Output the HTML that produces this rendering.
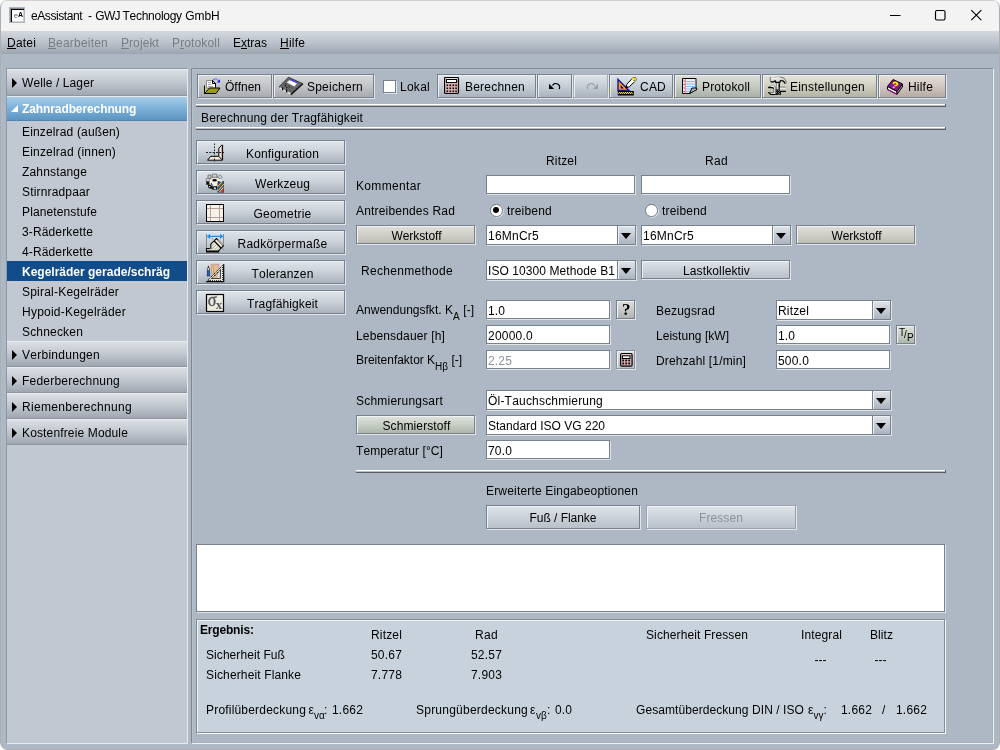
<!DOCTYPE html>
<html><head><meta charset="utf-8"><title>eAssistant - GWJ Technology GmbH</title>
<style>
*{box-sizing:border-box;margin:0;padding:0}
html,body{width:1000px;height:750px;overflow:hidden;background:#fff}
body{font-kerning:none;font-family:"Liberation Sans",sans-serif;font-size:12px;color:#000;letter-spacing:0.12px;position:relative}
.abs,.abs>*{position:absolute}
#win{position:absolute;left:0;top:0;width:1000px;height:750px;background:#aeb8c4;border-radius:8px;overflow:hidden;border:1px solid #acaeb1;border-top:0;will-change:transform}
#title{position:absolute;left:0;top:0;width:1000px;height:31px;background:#f3f3f3;box-shadow:inset 0 1px 0 #cfcfcf}
#title .t{position:absolute;left:30px;top:9px;font-size:12px;letter-spacing:-0.17px;line-height:14px}
#menu{position:absolute;left:0;top:31px;width:1000px;height:23px;background:linear-gradient(#d4d8de,#bcc3cc 50%,#9ca5b0)}
#menu span{position:absolute;top:5px;font-size:12px;line-height:14px}
#menu span.d{color:#787d84}
#menu u{text-decoration:underline}
.lbl{position:absolute;white-space:nowrap;line-height:14px;height:14px}
.btn{position:absolute;border:1px solid #8d949d;background:linear-gradient(#dfe3e8,#c3c9d1);box-shadow:inset 1px 1px 0 #f4f6f8;text-align:center;white-space:nowrap}
.inp{position:absolute;background:#fff;border:1px solid #78808b;box-shadow:1px 1px 0 #dfe4e9;white-space:nowrap;overflow:hidden}
.inp span{position:absolute;left:1px;top:3px;line-height:14px}

#side{position:absolute;left:5px;top:68px;width:182px;height:676px;background:#c2c8d1;border:1px solid #8f99a5;border-right-color:#e6eaee;border-bottom-color:#e6eaee}
.sh{position:absolute;left:0;width:180px;height:26px;box-shadow:inset 0 1px 0 #e8ebef;background:linear-gradient(#dde1e6 0%,#c2c8d0 50%,#a0a7b1 100%);border-bottom:1px solid #8f96a0}
.sh span{position:absolute;left:15px;top:7px;line-height:14px;white-space:nowrap}
.sh i{position:absolute;left:5px;top:9px;width:0;height:0;border-left:5.500px solid #000;border-top:5px solid transparent;border-bottom:5px solid transparent}
.sh.open{background:linear-gradient(#a8d0ea 0%,#7eb2d9 50%,#5c95c3 100%);border-bottom:1px solid #4f86b4;color:#fff;font-weight:bold;letter-spacing:-0.1px}
.sh.open span{top:6px}
.sh.open i{left:4px;top:9px;border:0;border-left:7px solid transparent;border-bottom:7px solid #fff}
.si{position:absolute;left:0;width:180px;height:20px}
.si span{position:absolute;left:15px;top:4px;line-height:14px;white-space:nowrap}
.si.sel{background:#114c8b;color:#fff;font-weight:bold;letter-spacing:0}

#main{position:absolute;left:190px;top:68px;width:802px;height:675px;border:1px solid #7f8791;border-right-color:#a6afba;border-bottom-color:#a6afba;box-shadow:inset 1px 1px 0 #b7c0cb,1px 1px 0 #eef1f4}
.tb{position:absolute;top:74px;height:24px;border:1px solid #78808b;background:linear-gradient(#d9dbde 0%,#c6c9cc 50%,#abafb3 100%);box-shadow:1px 1px 0 #e2e6eb,inset 1px 1px 0 #eceef0;white-space:nowrap}
.tb span{position:absolute;top:5px;line-height:14px}
.tb svg{position:absolute}
.sep{position:absolute;height:3px;background:linear-gradient(#fff 0,#fff 1px,#b9bcc0 1px,#b9bcc0 2px,#585c62 2px,#585c62 3px);border-right:1px solid #585c62}
.nb{position:absolute;left:195px;width:149px;height:24px;border:1px solid #78808b;background:linear-gradient(#dfe4ea 0%,#cdd3db 45%,#a9b1bc 100%);box-shadow:1px 1px 0 #e2e6eb,inset 1px 1px 0 #eef1f4;white-space:nowrap}
.nb span{position:absolute;left:24px;right:0;top:6px;line-height:14px;text-align:center}
.nb svg{position:absolute}
.bt{position:absolute;height:19px;border:1px solid #78808b;background:linear-gradient(#dfe3e9 0%,#ccd2da 50%,#b9c0ca 100%);box-shadow:1px 1px 0 #e2e6eb,inset 1px 1px 0 #f0f2f5;text-align:center;line-height:14px;padding:3px 0 0 2px;white-space:nowrap}
.bt.w{background:linear-gradient(#e0dfd9 0%,#d0cfc8 50%,#bfbeb6 100%)}
.bt.dis{color:#8a929c}
.cb{position:absolute;height:20px;background:#fff;border:1px solid #78808b;box-shadow:1px 1px 0 #dfe4e9}
.cb span{position:absolute;left:1px;top:3px;line-height:14px;white-space:nowrap}
.cb b{position:absolute;right:0;top:0;bottom:0;width:18px;border-left:1px solid #78808b;background:linear-gradient(#dfe4ea,#c6cdd6 50%,#aab3bf);box-shadow:inset 1px 1px 0 #eef1f4}
.cb b:after{content:"";position:absolute;left:3px;top:7px;border-left:5px solid transparent;border-right:5px solid transparent;border-top:6px solid #000}
.rd{position:absolute;width:12.500px;height:12.500px;border-radius:50%;background:#fff;border:1px solid #6d7580;box-shadow:0.700px 0.700px 0 #e6eaee}
.rd.on:after{content:"";position:absolute;left:2.100px;top:2.100px;width:6.300px;height:6.300px;border-radius:50%;background:#000}

#res{position:absolute;left:195px;top:619px;width:749px;height:114px;background:#c8d2dd;border:1px solid #858d97;box-shadow:inset 1px 1px 0 #eef1f4,1px 1px 0 #f4f6f8}
sub{font-size:10px;vertical-align:baseline;position:relative;top:6px;line-height:0}

.tb{background:linear-gradient(#dde3ea 0%,#c9d0d9 45%,#aab3be 100%)}
.tb.g{background:linear-gradient(#d6d8da 0%,#c2c4c7 50%,#a8abaf 100%)}
.tb.gr{background:linear-gradient(#dcdfd9 0%,#c6cbc4 50%,#a9b0a8 100%)}
.tb.be{background:linear-gradient(#e4e4d9 0%,#d0d0c2 50%,#b3b3a3 100%)}
.tb.pk{background:linear-gradient(#e6dfda 0%,#d2c8c2 50%,#b6aaa3 100%)}
.tb.dis{border-color:#a3abb5}
.bt.n{background:linear-gradient(#dedede 0%,#cbcbcb 50%,#b2b2b2 100%)}
.bt.gn{background:linear-gradient(#dfe4dc 0%,#c8cfc5 50%,#adb6aa 100%)}
</style></head><body>
<div id="win">
<div id="title"><div style="position:absolute;left:8px;top:7px;width:16px;height:16px;border:1px solid #a9b7c6;background:#fff;box-shadow:inset 1px 1px 0 #8a8a8a,inset 2px 2px 0 #000,inset -1px -1px 0 #d0d0d0;font-size:7px;font-weight:bold;letter-spacing:0;line-height:8px"><span style="position:absolute;left:4px;top:4px;color:#555;font-weight:normal">e</span><span style="position:absolute;left:8px;top:3px">A</span></div>
<svg style="position:absolute;left:884px;top:5px" width="110" height="22" viewBox="885 5 110 22" fill="none" stroke="#000" stroke-width="1.150"><path d="M890 15.5h10.5"></path><rect x="935.5" y="10.5" width="9.5" height="9.5" rx="1.5"></rect><path d="M971.3 10.2l10 10M981.3 10.2l-10 10"></path></svg>
<span class="t" style="left:30px;letter-spacing:-0.42px">eAssistant</span><span class="t" style="left:87px;letter-spacing:0">-</span><span class="t" style="left:94.3px;letter-spacing:-0.75px">GWJ</span><span class="t" style="left:121.5px;letter-spacing:-0.27px">Technology</span><span class="t" style="left:184.3px;letter-spacing:-0.1px">GmbH</span></div>
<div id="menu"><span style="left: 6px; letter-spacing: 0.163px;"><u style="letter-spacing: 0.334px;">D</u>atei</span><span class="d" style="left: 47px; letter-spacing: 0.218px;"><u style="letter-spacing: -0.004px;">B</u>earbeiten</span><span class="d" style="left: 120px; letter-spacing: 0.109px;"><u style="letter-spacing: -0.004px;">P</u>rojekt</span><span class="d" style="left: 171px; letter-spacing: 0.164px;">P<u style="letter-spacing: 0.004px;">r</u>otokoll</span><span style="left: 232px; letter-spacing: -0.002px;">E<u style="letter-spacing: 0px;">x</u>tras</span><span style="left: 279px; letter-spacing: 0.165px;"><u style="letter-spacing: 0.334px;">H</u>ilfe</span></div>
<div id="side">
<div class="sh" style="top:0;height:27px"><i style="top:9px"></i><span style="top: 7px; letter-spacing: 0.1px;">Welle / Lager</span></div>
<div class="sh open" style="top:27px;height:25px"><i></i><span>Zahnradberechnung</span></div>
<div class="si" style="top:52px"><span style="letter-spacing: 0.154px;">Einzelrad (außen)</span></div>
<div class="si" style="top:72px"><span style="letter-spacing: 0.193px;">Einzelrad (innen)</span></div>
<div class="si" style="top:92px"><span style="letter-spacing: 0.162px;">Zahnstange</span></div>
<div class="si" style="top:112px"><span style="letter-spacing: 0.164px;">Stirnradpaar</span></div>
<div class="si" style="top:132px"><span style="letter-spacing: 0.124px;">Planetenstufe</span></div>
<div class="si" style="top:152px"><span style="letter-spacing: 0.136px;">3-Räderkette</span></div>
<div class="si" style="top:172px"><span style="letter-spacing: 0.136px;">4-Räderkette</span></div>
<div class="si sel" style="top:192px"><span>Kegelräder gerade/schräg</span></div>
<div class="si" style="top:212px"><span style="letter-spacing: 0.213px;">Spiral-Kegelräder</span></div>
<div class="si" style="top:232px"><span style="letter-spacing: 0.232px;">Hypoid-Kegelräder</span></div>
<div class="si" style="top:252px"><span style="letter-spacing: 0.181px;">Schnecken</span></div>
<div class="sh" style="top:272px"><i></i><span style="letter-spacing: 0.272px;">Verbindungen</span></div>
<div class="sh" style="top:298px"><i></i><span style="letter-spacing: 0.218px;">Federberechnung</span></div>
<div class="sh" style="top:324px"><i></i><span style="letter-spacing: 0.329px;">Riemenberechnung</span></div>
<div class="sh" style="top:350px"><i></i><span style="letter-spacing: 0.145px;">Kostenfreie Module</span></div>
</div>
<div id="main"></div>
<div class="tb g" style="left:196px;width:75px"><svg style="left:6px;top:3px" width="17" height="17" viewBox="0 0 17 17"><path d="M2.5 2.5h6l3 3v4.5h-9z" fill="#fff" stroke="#888" stroke-width="1"></path><path d="M8.5 2.5v3h3z" fill="#fff" stroke="#000" stroke-width="1"></path><path d="M8.5 2.5l3 3v4" fill="none" stroke="#000" stroke-width="1"></path><path d="M4 4.5h3M4 6.5h3.5M4 8.500h5" stroke="#aaa" stroke-width="1"></path><path d="M0.5 7.500v8" stroke="#000" stroke-width="1"></path><path d="M1 7.500h1.200v6.500l-1.200 1.500z" fill="#d6d64a"></path><path d="M0.500 15.500l5-5.500h10.500l-4 5.500z" fill="#9c9c18" stroke="#000" stroke-width="1" stroke-linejoin="round"></path><path d="M9.300 1.800q2.500-2.200 5 0.800" fill="none" stroke="#2a2aff" stroke-width="1" stroke-dasharray="1.500 0.700"></path><path d="M16 1.300v3.200h-3.200z" fill="#1a1aff"></path></svg><span style="left: 27px; letter-spacing: -0.004px;">Öffnen</span></div>
<div class="tb g" style="left:272px;width:101px"><svg style="left:4px;top:0px" width="27" height="22" viewBox="0 0 27 22"><path d="M10.400 2.200l14 6.300-11.600 10.600-11.700-7.300z" fill="#666" stroke="#2a2a2a" stroke-width="0.800"></path><path d="M13 19.700l11.600-10.700v-0.600" fill="none" stroke="#111" stroke-width="1.300"></path><path d="M11.700 5.100l7.300 3.200-2.500 3.200-7.700-3.900z" fill="#fff"></path><path d="M12 3.800l7.400 3.200-0.400 1.300-7.300-3.200z" fill="#3c3cff"></path><path d="M1.900 12.100l10.700 5.900-0.200 1.500-10.600-6.100z" fill="#f4f4f4"></path><path d="M4.300 12.500l0.600 2.800M8.300 14.500l0.600 3" stroke="#111" stroke-width="1.400"></path><path d="M6.500 10.200l1.500 0.800M8 12l1.500 0.800M10.500 11.500l1.500 0.800M7 8.500l1.300 0.700" stroke="#1a1a1a" stroke-width="1"></path><path d="M17 12.500l4-4" stroke="#777" stroke-width="1"></path></svg><span style="left: 33px; letter-spacing: 0.218px;">Speichern</span></div>
<div class="inp" style="left:382px;top:80px;width:13px;height:13px"></div>
<div class="lbl" style="left: 399px; top: 80px; letter-spacing: 0.263px;">Lokal</div>
<div class="tb" style="left:436px;width:99px"><svg style="left:6px;top:2px" width="16" height="18" viewBox="0 0 16 18"><rect x="0.500" y="0.500" width="14" height="16" rx="1.300" fill="#dcb0b4" stroke="#000" stroke-width="1.200"></rect><path d="M1.500 1.500h12" stroke="#f0d4d6" stroke-width="1"></path><rect x="2.500" y="2.500" width="10" height="3" fill="#fff" stroke="#000" stroke-width="1"></rect><g fill="#000"><rect x="2.500" y="7.500" width="1.600" height="1.600"></rect><rect x="5.500" y="7.500" width="1.600" height="1.600"></rect><rect x="8.500" y="7.500" width="1.600" height="1.600"></rect><rect x="11.300" y="7.500" width="1.600" height="1.600"></rect><rect x="2.500" y="10.500" width="1.600" height="1.600"></rect><rect x="5.500" y="10.500" width="1.600" height="1.600"></rect><rect x="8.500" y="10.500" width="1.600" height="1.600"></rect><rect x="11.300" y="10.500" width="1.600" height="1.600"></rect><rect x="2.500" y="13.500" width="1.600" height="1.600"></rect><rect x="5.500" y="13.500" width="1.600" height="1.600"></rect><rect x="8.500" y="13.500" width="1.600" height="1.600"></rect><rect x="11.300" y="13.500" width="1.600" height="1.600"></rect></g></svg><span style="left: 27px; letter-spacing: 0.217px;">Berechnen</span></div>
<div class="tb" style="left:536px;width:35px"><svg style="left:10px;top:6px" width="14" height="12" viewBox="0 0 14 12"><path d="M1 2.800v5.200h5.200z" fill="#000"></path><path d="M4.500 4.500a3.600 3.600 0 1 1 6.700 3.600" fill="none" stroke="#000" stroke-width="1.200"></path></svg></div>
<div class="tb dis" style="left:572px;width:35px"><svg style="left:11px;top:6px" width="14" height="12" viewBox="0 0 14 12"><path d="M13 2.800v5.200h-5.200z" fill="#9a9da1"></path><path d="M9.500 4.500a3.600 3.600 0 1 0-6.700 3.600" fill="none" stroke="#9a9da1" stroke-width="1.200"></path></svg></div>
<div class="tb" style="left:608px;width:64px"><svg style="left:7px;top:1px" width="20" height="20" viewBox="0 0 20 20"><path d="M1 3.500v11h11z" fill="#ff9a1a" stroke="#15158c" stroke-width="1.400" stroke-linejoin="miter"></path><path d="M3.600 9v3.400h3.400z" fill="#15158c"></path><rect x="0.800" y="15" width="16" height="4.500" fill="#000"></rect><path d="M1.500 17.800l1-1.600 1 1.600 1-1.600 1 1.600 1-1.600 1 1.600 1-1.600 1 1.600 1-1.600 1 1.600 1-1.600 1 1.600 1-1.600 1 1.600" fill="none" stroke="#ffff3a" stroke-width="1"></path><path d="M8.500 12l1.300-3.700 6.400-6.800 2.500 0.300 0.300 2.500-6.700 6.500z" fill="#fff" stroke="#000" stroke-width="1"></path><path d="M14.500 3.200l1.700-1.700 2.500 0.300 0.300 2.500-1.800 1.700z" fill="#ffee30"></path><path d="M16.700 4.700l0.800-0.800" stroke="#2030c0" stroke-width="1.200"></path><path d="M8.500 12l0.900-2.500 1.700 1.700z" fill="#000"></path></svg><span style="left: 30px; letter-spacing: 0.221px;">CAD</span></div>
<div class="tb gr" style="left:673px;width:87px"><svg style="left:7px;top:3px" width="16" height="17" viewBox="0 0 16 17"><path d="M0.500 0.500h13.500v9.500l-6 5.500h-7.500z" fill="#ececf2" stroke="#000" stroke-width="1"></path><path d="M4 3.500h9.500M4 6h9.500M4 8.500h9.500M4 11h7M4 13.500h4" stroke="#7cc0ff" stroke-width="1"></path><path d="M3.300 1v14.500" stroke="#ff7070" stroke-width="1"></path><path d="M1.600 3h1M1.600 6.500h1M1.600 10h1M1.600 13.500h1" stroke="#333" stroke-width="1"></path><path d="M7.500 15.500l2.500-5.500h4.500l0.500 1.500z" fill="#b8b8b8" stroke="#000" stroke-width="1" stroke-linejoin="round"></path></svg><span style="left: 27px; letter-spacing: 0.146px;">Protokoll</span></div>
<div class="tb be" style="left:761px;width:115px"><svg style="left:5px;top:1px" width="20" height="20" viewBox="0 0 20 20"><path d="M2.200 1.500h2.500l1.500 0.500 3-0.800h4.500l2.500 1.200 1.800 2.500v2.500l-1.200-0.300-0.800-2-1.800-0.700h-1.800l-0.400 1.600h-4l-0.500-1.400-2 0.800-2.300 0.400-0.800-1z" fill="#dcdcdc" stroke="#000" stroke-width="0.500"></path><path d="M2.500 5.700l2.300 0.400 2.500-1 0.500 1.500h4l0.500-1.800h2l1.500 0.700 1 2.100" fill="none" stroke="#000" stroke-width="1.100"></path><path d="M2.800 1.900h2.300l1.200 0.500 2.800-0.700h3" fill="none" stroke="#fff" stroke-width="1.100"></path><rect x="8.700" y="7.300" width="3.200" height="6" fill="#fff"></rect><path d="M11.200 7.300v6" stroke="#000" stroke-width="1.500"></path><path d="M8.700 7.300v6" stroke="#555" stroke-width="0.700"></path><rect x="7.800" y="13.400" width="5.100" height="5.400" fill="#000"></rect><path d="M8.500 14.500l3.500 3.500M10.300 14l2.300 2.300M8.300 16.300l2.300 2.300" stroke="#fff" stroke-width="0.800" stroke-dasharray="1 1"></path><path d="M0.300 11.200l2.200-1h4.200l1 1.500v5.500l-1.500 1.400h-3.300l-2.500-2 4.700 0.200 0.700-1.200v-2.600l-0.700-1.300z" fill="#e6e6e6" stroke="#000" stroke-width="0.500"></path><path d="M0.300 11.600h4.500l0.800 1.200" fill="none" stroke="#000" stroke-width="1.100"></path><path d="M0.300 16.300l2.500 2.200h4.800" fill="none" stroke="#000" stroke-width="1.100"></path><path d="M3 10.500h3.200" stroke="#fff" stroke-width="0.900"></path><rect x="11.900" y="11.300" width="6" height="4" fill="#c4c4c4"></rect><path d="M11.900 12.200h6" stroke="#f4f4f4" stroke-width="1.200"></path><path d="M11.900 11.100h6" stroke="#555" stroke-width="0.600"></path><path d="M11.900 15.300h6" stroke="#000" stroke-width="1.200"></path></svg><span style="left: 27px; letter-spacing: 0.227px;">Einstellungen</span></div>
<div class="tb pk" style="left:877px;width:68px"><svg style="left:7px;top:3px" width="18" height="18" viewBox="0 0 18 18"><path d="M1.500 8.500l5.500-7 9.500 4.500-5.500 7.500z" fill="#8c148c" stroke="#000" stroke-width="1" stroke-linejoin="round"></path><path d="M1.500 8.500v3l9.500 4.800v-2.800z" fill="#f4f4f4" stroke="#000" stroke-width="1" stroke-linejoin="round"></path><path d="M11 13.500l5.500-7.500v2.800l-5.500 7.500z" fill="#a0a0a0" stroke="#000" stroke-width="1" stroke-linejoin="round"></path><path d="M1.500 11.500l9.500 4.800" stroke="#8c148c" stroke-width="1.300"></path><path d="M7 5.800q1.500-2.200 3.800-1 1.500 1.200-0.500 2.400l-1.700 0.500" fill="none" stroke="#ffee00" stroke-width="1.700"></path><rect x="6.800" y="8.600" width="1.800" height="1.600" fill="#ffee00"></rect></svg><span style="left: 29px; letter-spacing: 0.199px;">Hilfe</span></div>
<div class="sep" style="left:195px;top:104px;width:750px"></div>
<div class="lbl" style="left: 200px; top: 111px; letter-spacing: 0.139px;">Berechnung der Tragfähigkeit</div>
<div class="sep" style="left:195px;top:127px;width:750px"></div>
<div class="nb" style="top:140px"><svg style="left:3px;top:-1px" width="32" height="24" viewBox="0 0 32 24"><path d="M7.600 20.200l3-3.900h8.200v-8l3-3.200h0.800v15.100z" fill="#f0ecd8" stroke="#000" stroke-width="1" stroke-linejoin="miter"></path><path d="M8.500 19.600l12.500 0 1-1v-12.500l-1 1.200v10.800l-1.200 1z" fill="#d8a0a8"></path><path d="M18.800 16.300l3 3.400" stroke="#000" stroke-width="1"></path><path d="M14.500 3.500v18.500" stroke="#222" stroke-width="1" stroke-dasharray="1.600 1.400"></path><path d="M6 12.500h18" stroke="#222" stroke-width="1" stroke-dasharray="2 1.300"></path></svg><span style="letter-spacing: 0.176px;">Konfiguration</span></div>
<div class="nb" style="top:170px"><svg style="left:3px;top:-1px" width="32" height="24" viewBox="0 0 32 24"><path d="M8 5h3v3.300h-3z" fill="#cdcdcd" stroke="#666" stroke-width="0.800"></path><path d="M12.300 4.200h4.500v3.600h-4.500z" fill="#d4d4d4" stroke="#666" stroke-width="0.800"></path><path d="M17.300 6.800l2.500-2 2.500 2.200-2 2z" fill="#c4dce2" stroke="#666" stroke-width="0.700"></path><path d="M6.200 8.500h3.600v3h-3.600z" fill="#c8c8c8" stroke="#777" stroke-width="0.700"></path><path d="M6.200 11.500h3.400v3.200h-3.400z" fill="#111"></path><path d="M9.600 10.600l3-2.600h5.300l4.500 2.500v2l-3.200 3-2.600 0.500-3.800 0.600-3.200-2.600z" fill="#f2eee2"></path><path d="M9.600 8.300l2.700-0.500v-0.800h4.500v0.800l1.100 0.200 2-1.200" fill="none" stroke="#888" stroke-width="0.600"></path><ellipse cx="14.600" cy="10.200" rx="2.300" ry="1.300" fill="#000"></ellipse><path d="M8 14.700h2.600l2.200 2v2h-2.800l-2-1.500z" fill="#111"></path><ellipse cx="9.600" cy="16.600" rx="0.800" ry="0.600" fill="#fff"></ellipse><path d="M12.200 16.600l4.800-0.600v3.800h-4.800z" fill="#111"></path><rect x="13.800" y="17.300" width="2.200" height="1.900" fill="#a8dce8"></rect><path d="M11.200 13.200l1.200 2.400" stroke="#111" stroke-width="1"></path><rect x="17.700" y="11.200" width="6.200" height="11.300" fill="#101018"></rect><path d="M17.700 14.500l3.300-3M17.700 18.700l6-6.300M18.200 22.500l5.600-6.400" stroke="#1c58c8" stroke-width="1.300"></path><path d="M17.700 16.600l4.500-4.800M17.700 20.800l6.100-6.600" stroke="#ffb820" stroke-width="1.200"></path><path d="M20.500 22.400l3.300-4M22.300 22.400l1.500-1.800" stroke="#e84810" stroke-width="1.200"></path><path d="M19.300 22.300l4-4.900" stroke="#fff" stroke-width="0.800"></path><path d="M18 11.500l4.400-1v1.500" fill="#c4dce2"></path></svg><span style="letter-spacing: 0.123px;">Werkzeug</span></div>
<div class="nb" style="top:200px"><svg style="left:3px;top:-1px" width="32" height="24" viewBox="0 0 32 24"><rect x="6.500" y="4.500" width="17" height="17" fill="#f6f2e6" stroke="#000" stroke-width="1"></rect><path d="M10.500 5v16M19.500 5v16M7 8.500h16M7 17.500h16" stroke="#b8a0a0" stroke-width="1"></path></svg><span style="letter-spacing: 0.22px;">Geometrie</span></div>
<div class="nb" style="top:230px"><svg style="left:3px;top:-1px" width="32" height="24" viewBox="0 0 32 24"><path d="M6.500 4v14M23.500 4v10.500" stroke="#888" stroke-width="1"></path><path d="M7.500 6.400h15.500" stroke="#2a8ad8" stroke-width="1.400"></path><path d="M6.900 6.400l3.200-2.600v5.200zM23.200 6.400l-3.200-2.600v5.200z" fill="#2a8ad8"></path><path d="M6.500 18.500h4.300v-4.300l5.700-5.700 7 7.200-4.800 5v1.300h-12.200z" fill="#eeeeda" stroke="#000" stroke-width="1.100" stroke-linejoin="miter"></path><path d="M14.200 11l6.700 7" stroke="#000" stroke-width="1.100"></path><path d="M18 9.800l5.300 5.400" stroke="#d8a0a8" stroke-width="1"></path><path d="M7.500 20.500l5-3M10 21l6-6M13 21l5-4.500M16 21l3-2.500M11 17l3-3" stroke="#999" stroke-width="0.800"></path><path d="M7 21.300h11.500" stroke="#000" stroke-width="1.400"></path><path d="M12.200 8.300l11.500 11.200" stroke="#333" stroke-width="0.600" stroke-dasharray="1.500 1"></path></svg><span style="letter-spacing: 0.254px;">Radkörpermaße</span></div>
<div class="nb" style="top:260px"><svg style="left:3px;top:-1px" width="32" height="24" viewBox="0 0 32 24"><rect x="11.300" y="4.300" width="7.400" height="14.200" fill="#fbf3d8" stroke="#c89090" stroke-width="1"></rect><path d="M13.500 4.500v14" stroke="#ffd040" stroke-width="1"></path><path d="M12 6h6M12 8h6M12 10h6M12 12h6M12 14h6M12 16h6" stroke="#b86848" stroke-width="0.800"></path><path d="M6.300 21.700h17.400v-17.400z" fill="#e9e9e1"></path><path d="M12 18.500h8.500v-8.500z" fill="#d6dbe2"></path><path d="M12.300 18.200v-0.300l6.200-6.200v6.500z" fill="#fbf3d8"></path><path d="M13.500 17v1.200" stroke="#ffd040" stroke-width="1"></path><path d="M14.500 15h3.800M14.500 17h3.800M16.500 13h1.800" stroke="#b86848" stroke-width="0.800"></path><path d="M12 18.500h8.500v-8.500" fill="none" stroke="#333" stroke-width="0.900"></path><path d="M6.300 21.700h17.400v-17.400" fill="none" stroke="#000" stroke-width="1.200"></path><path d="M8.500 21.200v-1M10.500 21.200v-1M12.500 21.200v-1M14.500 21.200v-1M16.500 21.200v-1M18.500 21.200v-1M20.500 21.200v-1M23.200 19.500h-1M23.200 17.500h-1M23.200 15.500h-1M23.200 13.500h-1M23.200 11.500h-1M23.200 9.500h-1M23.200 7.500h-1" stroke="#000" stroke-width="0.900"></path><path d="M6.300 21.700l17.400-17.400" stroke="#000" stroke-width="1" stroke-dasharray="1.200 1"></path><path d="M9.300 20.600l13.200-13.200" stroke="#000" stroke-width="0.900" stroke-dasharray="1 1.200"></path><path d="M11.500 19l9.500-9.500" stroke="#000" stroke-width="0.900" stroke-dasharray="1.200 1"></path><rect x="7.200" y="8" width="2.400" height="8" fill="#1a6ad8" stroke="#101030" stroke-width="0.600"></rect><rect x="7.600" y="8" width="1.600" height="2" fill="#ffd860"></rect><path d="M8.400 5.800v2.200" stroke="#222" stroke-width="1"></path></svg><span style="letter-spacing: 0.196px;">Toleranzen</span></div>
<div class="nb" style="top:290px"><svg style="left:3px;top:-1px" width="32" height="24" viewBox="0 0 32 24"><rect x="6.500" y="4.500" width="17" height="17" fill="#ecece0" stroke="#000" stroke-width="1.200"></rect><text x="7.800" y="15.800" font-family="Liberation Serif, serif" font-size="18" fill="#55555c" stroke="#55555c" stroke-width="0.400" textLength="9" lengthAdjust="spacingAndGlyphs">σ</text><text x="15.800" y="19" font-family="Liberation Serif, serif" font-size="13" font-weight="bold" fill="#55555c">x</text></svg><span style="letter-spacing: 0.125px;">Tragfähigkeit</span></div>
<div class="lbl" style="left: 545px; top: 154px; letter-spacing: 0.166px;">Ritzel</div>
<div class="lbl" style="left: 704px; top: 154px; letter-spacing: 0.329px;">Rad</div>
<div class="lbl" style="left: 355px; top: 179px; letter-spacing: 0.331px;">Kommentar</div>
<div class="inp" style="left:485px;top:175px;width:149px;height:19px"></div>
<div class="inp" style="left:640px;top:175px;width:149px;height:19px"></div>
<div class="lbl" style="left: 355px; top: 204px; letter-spacing: 0.183px;">Antreibendes Rad</div>
<div class="rd on" style="left:489px;top:204px"></div><div class="lbl" style="left: 506px; top: 204px; letter-spacing: 0.204px;">treibend</div>
<div class="rd" style="left:644px;top:204px"></div><div class="lbl" style="left: 661px; top: 204px; letter-spacing: 0.204px;">treibend</div>
<div class="bt w" style="left: 355px; top: 225px; width: 119px; letter-spacing: -0.075px;">Werkstoff</div>
<div class="cb" style="left:485px;top:225px;width:150px"><span style="letter-spacing: 0.235px;">16MnCr5</span><b></b></div>
<div class="cb" style="left:640px;top:225px;width:150px"><span style="letter-spacing: 0.235px;">16MnCr5</span><b></b></div>
<div class="bt w" style="left: 795px; top: 225px; width: 119px; letter-spacing: -0.075px;">Werkstoff</div>
<div class="lbl" style="left: 360px; top: 264px; letter-spacing: 0.303px;">Rechenmethode</div>
<div class="cb" style="left:485px;top:260px;width:150px"><span style="letter-spacing: 0.079px;">ISO 10300 Methode B1</span><b></b></div>
<div class="bt" style="left: 640px; top: 260px; width: 149px; letter-spacing: 0.126px;">Lastkollektiv</div>
<div class="lbl" style="left: 355px; top: 303px; letter-spacing: 0.014px;">Anwendungsfkt. K<sub style="letter-spacing: 0.33px;">A</sub> [-]</div>
<div class="inp" style="left:485px;top:300px;width:124px;height:19px"><span style="letter-spacing: 0.106px;">1.0</span></div>
<div class="bt n" style="left:615px;top:300px;width:19px;padding:0"><span style="position:absolute;left:5px;top:0;font-family:'Liberation Serif',serif;font-weight:bold;font-size:17px;line-height:17px;letter-spacing:0">?</span></div>
<div class="lbl" style="left: 655px; top: 304px; letter-spacing: 0.181px;">Bezugsrad</div>
<div class="cb" style="left:775px;top:300px;width:115px"><span style="letter-spacing: 0.166px;">Ritzel</span><b></b></div>
<div class="lbl" style="left: 355px; top: 329px; letter-spacing: 0.151px;">Lebensdauer [h]</div>
<div class="inp" style="left:485px;top:325px;width:124px;height:19px"><span style="letter-spacing: 0.232px;">20000.0</span></div>
<div class="lbl" style="left: 655px; top: 329px; letter-spacing: 0.023px;">Leistung [kW]</div>
<div class="inp" style="left:775px;top:325px;width:114px;height:19px"><span style="letter-spacing: 0.106px;">1.0</span></div>
<div class="bt gn" style="left:895px;top:325px;width:19px;padding:0;font-size:10px;letter-spacing:0;line-height:10px;text-align:left"><span style="position: absolute; left: 2px; top: 2px; letter-spacing: -0.108px;">T</span><span style="position: absolute; left: 7px; top: 4px; letter-spacing: 0.222px;">/</span><span style="position: absolute; left: 10px; top: 7px; letter-spacing: 0.33px;">P</span></div>
<div class="lbl" style="left: 355px; top: 353px; letter-spacing: -0.019px;">Breitenfaktor K<sub style="letter-spacing: 0.013px;">Hβ</sub> [-]</div>
<div class="inp" style="left:485px;top:350px;width:124px;height:19px;color:#8a929c"><span style="letter-spacing: 0.161px;">2.25</span></div>
<div class="bt" style="left:615px;top:350px;width:19px;padding:0;border-color:#8a929c"><svg style="position:absolute;left:3px;top:2px" width="13" height="14" viewBox="0 0 13 14"><rect x="0.600" y="0.600" width="11.500" height="12.500" rx="1.200" fill="#dcb0b4" stroke="#000" stroke-width="1.200"></rect><path d="M1.500 1.600h9.500" stroke="#f0d4d6" stroke-width="1"></path><rect x="2.500" y="2.800" width="7.500" height="2.700" fill="#fff" stroke="#000" stroke-width="1"></rect><g fill="#000"><rect x="2.300" y="6.600" width="1.800" height="1.800"></rect><rect x="5.300" y="6.600" width="1.800" height="1.800"></rect><rect x="8.300" y="6.600" width="1.800" height="1.800"></rect><rect x="2.300" y="9.600" width="1.800" height="1.800"></rect><rect x="5.300" y="9.600" width="1.800" height="1.800"></rect><rect x="8.300" y="9.600" width="1.800" height="1.800"></rect></g></svg></div>
<div class="lbl" style="left: 655px; top: 354px; letter-spacing: 0.164px;">Drehzahl [1/min]</div>
<div class="inp" style="left:775px;top:350px;width:114px;height:19px"><span style="letter-spacing: 0.194px;">500.0</span></div>
<div class="lbl" style="left: 355px; top: 394px; letter-spacing: 0.212px;">Schmierungsart</div>
<div class="cb" style="left:485px;top:390px;width:405px"><span style="letter-spacing: 0.201px;">Öl-Tauchschmierung</span><b></b></div>
<div class="bt gn" style="left: 355px; top: 415px; width: 119px; letter-spacing: 0.11px;">Schmierstoff</div>
<div class="cb" style="left:485px;top:415px;width:405px"><span style="letter-spacing: 0.014px;">Standard ISO VG 220</span><b></b></div>
<div class="lbl" style="left: 355px; top: 444px; letter-spacing: 0.101px;">Temperatur [°C]</div>
<div class="inp" style="left:485px;top:440px;width:124px;height:19px"><span style="letter-spacing: 0.161px;">70.0</span></div>
<div class="sep" style="left:355px;top:470px;width:590px"></div>
<div class="lbl" style="left: 485px; top: 484px; letter-spacing: 0.176px;">Erweiterte Eingabeoptionen</div>
<div class="bt" style="left: 485px; top: 505px; width: 154px; height: 24px; padding: 5px 0px 0px; letter-spacing: -0.029px;">Fuß / Flanke</div>
<div class="bt dis" style="left: 645px; top: 505px; width: 150px; height: 24px; padding: 5px 0px 0px; border-color: rgb(154, 162, 173); letter-spacing: 0.093px;">Fressen</div>
<div class="inp" style="left:195px;top:544px;width:749px;height:68px"></div>
<div id="res"></div>
<div class="lbl" style="left:199px;top:623px;font-weight:bold;letter-spacing:-0.18px">Ergebnis:</div>
<div class="lbl" style="left: 370px; top: 628px; letter-spacing: 0.166px;">Ritzel</div>
<div class="lbl" style="left: 474px; top: 628px; letter-spacing: 0.329px;">Rad</div>
<div class="lbl" style="left: 645px; top: 628px; letter-spacing: 0.109px;">Sicherheit Fressen</div>
<div class="lbl" style="left: 800px; top: 628px; letter-spacing: 0.122px;">Integral</div>
<div class="lbl" style="left: 869px; top: 628px; letter-spacing: 0.066px;">Blitz</div>
<div class="lbl" style="left: 205px; top: 648px; letter-spacing: 0.069px;">Sicherheit Fuß</div>
<div class="lbl" style="left: 370px; top: 648px; letter-spacing: 0.194px;">50.67</div>
<div class="lbl" style="left: 470px; top: 648px; letter-spacing: 0.194px;">52.57</div>
<div class="lbl" style="left: 813.5px; top: 653px; letter-spacing: 0.004px;">---</div>
<div class="lbl" style="left: 873.5px; top: 653px; letter-spacing: 0.004px;">---</div>
<div class="lbl" style="left: 205px; top: 668px; letter-spacing: 0.135px;">Sicherheit Flanke</div>
<div class="lbl" style="left: 370px; top: 668px; letter-spacing: 0.194px;">7.778</div>
<div class="lbl" style="left: 470px; top: 668px; letter-spacing: 0.194px;">7.903</div>
<div class="lbl" style="left: 205px; top: 703px; letter-spacing: 0.193px;">Profilüberdeckung</div><div class="lbl" style="left: 307.5px; top: 703px; letter-spacing: -0.35px;">ε</div><div class="lbl" style="left: 313px; top: 709px; font-size: 10px; letter-spacing: 0.109px;">vα</div><div class="lbl" style="left: 323px; top: 703px; letter-spacing: -0.334px;">:</div><div class="lbl" style="left: 331px; top: 703px; letter-spacing: 0.194px;">1.662</div>
<div class="lbl" style="left: 415px; top: 703px; letter-spacing: 0.23px;">Sprungüberdeckung</div><div class="lbl" style="left: 529px; top: 703px; letter-spacing: -0.35px;">ε</div><div class="lbl" style="left: 535px; top: 709px; font-size: 10px; letter-spacing: 0.124px;">vβ</div><div class="lbl" style="left: 546px; top: 703px; letter-spacing: -0.334px;">:</div><div class="lbl" style="left: 554px; top: 703px; letter-spacing: 0.106px;">0.0</div>
<div class="lbl" style="left: 635px; top: 703px; letter-spacing: 0.071px;">Gesamtüberdeckung DIN / ISO</div><div class="lbl" style="left: 807px; top: 703px; letter-spacing: -0.35px;">ε</div><div class="lbl" style="left: 812.5px; top: 709px; font-size: 10px; letter-spacing: 0px;">vγ</div><div class="lbl" style="left: 822.5px; top: 703px; letter-spacing: -0.334px;">:</div>
<div class="lbl" style="left: 840px; top: 703px; letter-spacing: 0.194px;">1.662</div>
<div class="lbl" style="left: 881px; top: 703px; letter-spacing: -0.334px;">/</div>
<div class="lbl" style="left: 895px; top: 703px; letter-spacing: 0.194px;">1.662</div>
</div>

</body></html>
